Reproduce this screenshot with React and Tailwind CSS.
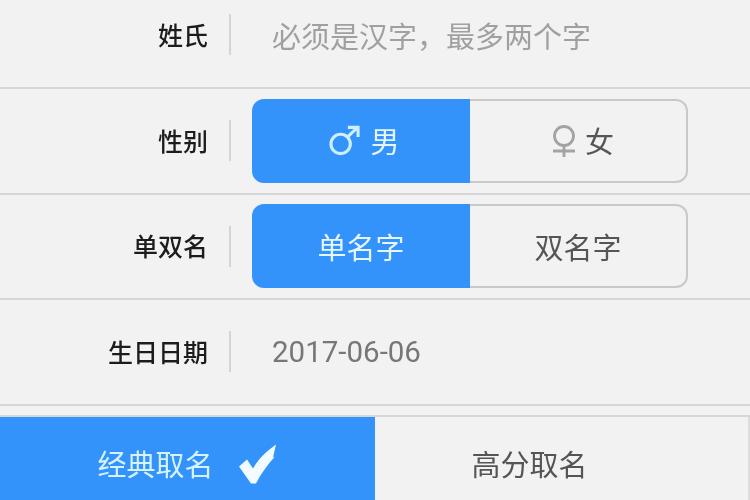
const font = { fontFamily: '"Noto Sans CJK SC", "Roboto", sans-serif' };

function Mars({ className }) {
  return (
    <svg viewBox="0 0 32 32" className={className} fill="none" stroke="currentColor" strokeWidth="3.2">
      <circle cx="12" cy="19.5" r="10" />
      <path d="M19.5 12 L29.5 2.5 M19.5 2.5 H30 V12.5" />
    </svg>
  );
}

function Venus({ className }) {
  return (
    <svg viewBox="0 0 26 32" className={className} fill="none" stroke="currentColor" strokeWidth="2.8">
      <circle cx="13" cy="11" r="9.5" />
      <path d="M13 20.5 V32 M2 26 H24" />
    </svg>
  );
}

function Row({ label, className, children }) {
  return (
    <div className={`flex items-center border-b-2 border-[#d6d6d6] ${className}`}>
      <div className="w-[208px] shrink-0 pb-[2px] text-right text-[25px] font-medium leading-[40px] text-[#1c1c1c]">{label}</div>
      <div className="ml-[21px] h-[41px] w-[2px] shrink-0 bg-[#d4d4d4]" />
      <div className="ml-[21px] min-w-0 flex-1">{children}</div>
    </div>
  );
}

function Segment({ left, right }) {
  return (
    <div className="flex h-[84px] w-[436px]">
      <div className="flex w-[218px] items-center justify-center rounded-l-[12px] bg-[#3493fb] text-[29px] text-[#e6f6ff]">{left}</div>
      <div className="flex flex-1 items-center justify-center rounded-r-[12px] border-2 border-l-0 border-[#c9c9c9] text-[29px] text-[#555555]">{right}</div>
    </div>
  );
}

export default function App() {
  return (
    <div style={font} className="flex h-[500px] w-[750px] flex-col overflow-hidden bg-[#f2f2f2] blur-[0.4px]">
      <Row label="姓氏" className="h-[89px] pb-[18px]">
        <div className="pl-[20px] text-[29px] leading-[40px] text-[#a0a0a0]">{"必须是汉字\uFF0C最多两个字"}</div>
      </Row>
      <Row label="性别" className="h-[105.5px]">
        <Segment
          left={<span className="flex items-center gap-[10px] pl-[7px]"><Mars className="h-[31px] w-[31px] text-[#cdefff]" />男</span>}
          right={<span className="flex items-center gap-[8px] pl-[9px]"><Venus className="h-[32px] w-[26px] text-[#a3a3a3]" />女</span>}
        />
      </Row>
      <Row label="单双名" className="h-[105.5px]">
        <Segment left="单名字" right="双名字" />
      </Row>
      <Row label="生日日期" className="h-[105.5px]">
        <div style={{ fontFamily: 'Roboto, sans-serif' }} className="pl-[20px] text-[29.5px] leading-[40px] text-[#777777]">2017-06-06</div>
      </Row>
      <div className="mt-[9px] flex flex-1 border-t-2 border-[#d6d6d6]">
        <div className="flex w-[375px] items-center justify-center gap-[24px] bg-[#3493fb] pt-[10px] text-[29px] text-[#d4f2ff]">
          <span>经典取名</span>
          <svg viewBox="0 0 40 40" className="h-[41px] w-[40px]">
            <path d="M1 23 L9 16 L15 25 C20 16 28 8 38 1 L35 14 L37 13 C29 22 23 30 18 40 L13 40 Z" fill="#f2fbff" />
          </svg>
        </div>
        <div className="flex flex-1 items-center justify-center border-r-2 border-[#dddddd] pr-[64px] pt-[10px] text-[29px] text-[#555555]">高分取名</div>
      </div>
    </div>
  );
}
